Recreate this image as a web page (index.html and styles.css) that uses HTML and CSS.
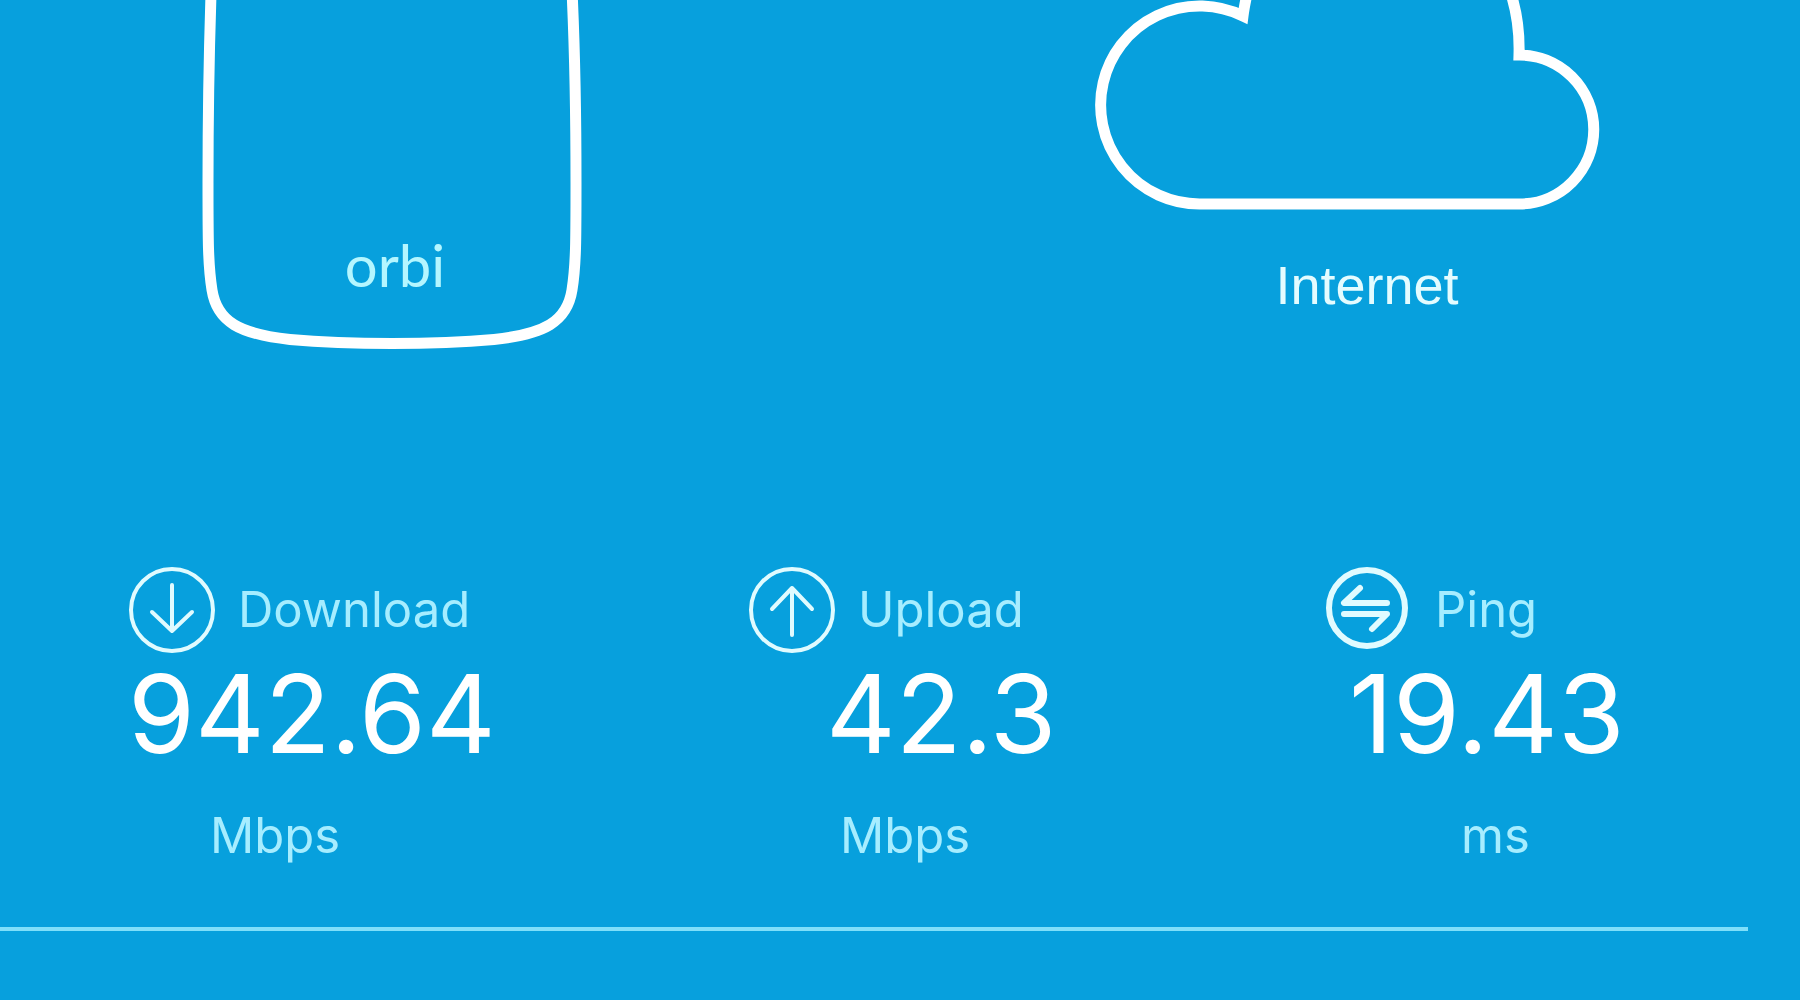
FILE: index.html
```html
<!DOCTYPE html>
<html lang="en">
<head>
<meta charset="utf-8">
<meta name="viewport" content="width=device-width, initial-scale=1">
<title>Internet speed</title>
<link rel="stylesheet" href="styles.css">
</head>
<body>
<main class="speed">
  <section class="devices">
    <figure class="device">
      <svg class="drawing" width="388" height="350" viewBox="198 0 388 350" role="img" aria-label="Orbi router">
        <path d="M211.500 -20C209 50 208 110 208 183C208 240 208 265 212 290C217 322 240 334 290 339.500Q335 343.500 392 343.500Q449 343.500 494 339.500C544 334 567 322 572 290C576 265 576 240 576 183C576 110 575 50 571.500 -20"/>
        <text class="brand" x="395" y="287" text-anchor="middle">orbi</text>
      </svg>
    </figure>
    <figure class="device">
      <svg class="drawing" width="546" height="220" viewBox="1094 0 546 220" aria-hidden="true">
        <path d="M1199.500 204A99 99 0 1 1 1243 16Q1244 8 1247 -6H1511Q1520 22 1519 55A74.500 74.500 0 0 1 1519.500 204Z"/>
      </svg>
      <figcaption class="caption">Internet</figcaption>
    </figure>
  </section>

  <section class="stats">
    <article class="stat download">
      <h2 class="label">
        <svg class="icon" width="88" height="88" viewBox="0 0 88 88" aria-hidden="true">
          <circle cx="44" cy="44" r="41"/><path d="M44 19V65M24 46L44 65L64 46"/>
        </svg>
        Download
      </h2>
      <p class="value">942.64</p>
      <p class="unit">Mbps</p>
    </article>
    <article class="stat upload">
      <h2 class="label">
        <svg class="icon" width="88" height="88" viewBox="0 0 88 88" aria-hidden="true">
          <circle cx="44" cy="44" r="41"/><path d="M44 69V22M24 43L44 22L64 43"/>
        </svg>
        Upload
      </h2>
      <p class="value">42.3</p>
      <p class="unit">Mbps</p>
    </article>
    <article class="stat ping">
      <h2 class="label">
        <svg class="icon bold" width="88" height="88" viewBox="0 0 88 88" aria-hidden="true">
          <circle cx="42" cy="42" r="38"/><path d="M35 22L19 37H62M19 48H62L47 63"/>
        </svg>
        Ping
      </h2>
      <p class="value">19.43</p>
      <p class="unit">ms</p>
    </article>
  </section>
  <hr class="divider">
</main>
</body>
</html>
```
FILE: styles.css
```css
* {
  box-sizing: border-box;
}

body {
  margin: 0;
  min-height: 100vh;
  background: #07a0dd;
  color: #fff;
  font-family: Inter, "Liberation Sans", sans-serif;
}

.devices {
  display: grid;
  grid-template-columns: 784fr 866fr;
  column-gap: 150px;
}

.device {
  display: flex;
  flex-direction: column;
  align-items: center;
  margin: 0;
}

.drawing {
  display: block;
  max-width: 100%;
  fill: none;
  stroke: #fff;
  stroke-width: 11;
}

.brand {
  fill: #b4f6ff;
  stroke: none;
  font-family: Lato, sans-serif;
  font-size: 58px;
  font-weight: 400;
}

.caption {
  padding-top: 33px;
  color: #e4fcff;
  font-family: "Liberation Sans", sans-serif;
  font-size: 54px;
  line-height: 64px;
}

.stats {
  display: grid;
  grid-template-columns: 620fr 577fr 475fr;
  padding: 216px 0 0 128px;
}

.label {
  display: flex;
  align-items: center;
  gap: 22px;
  margin: 0;
  color: #a6edff;
  font-size: 49px;
  font-weight: 400;
  line-height: 88px;
}

.icon {
  flex: none;
  fill: none;
  stroke: #e0fbff;
  stroke-width: 4;
  stroke-linecap: round;
  stroke-linejoin: round;
}

.icon.bold {
  stroke-width: 6;
}

.value {
  margin: 0;
  font-size: 108px;
  line-height: 120px;
}

.unit {
  margin: 0;
  padding-top: 30px;
  color: #a6edff;
  font-size: 49px;
  font-weight: 400;
  line-height: 64px;
}

.download .unit {
  padding-left: 82px;
}

.upload .value {
  padding-left: 78px;
}

.upload .unit {
  padding-left: 92px;
}

.ping .value {
  padding-left: 24px;
}

.ping .unit {
  padding-left: 136px;
}

.divider {
  height: 4px;
  margin: 59px 52px 0 0;
  border: 0;
  background: #7fdffa;
}
```
